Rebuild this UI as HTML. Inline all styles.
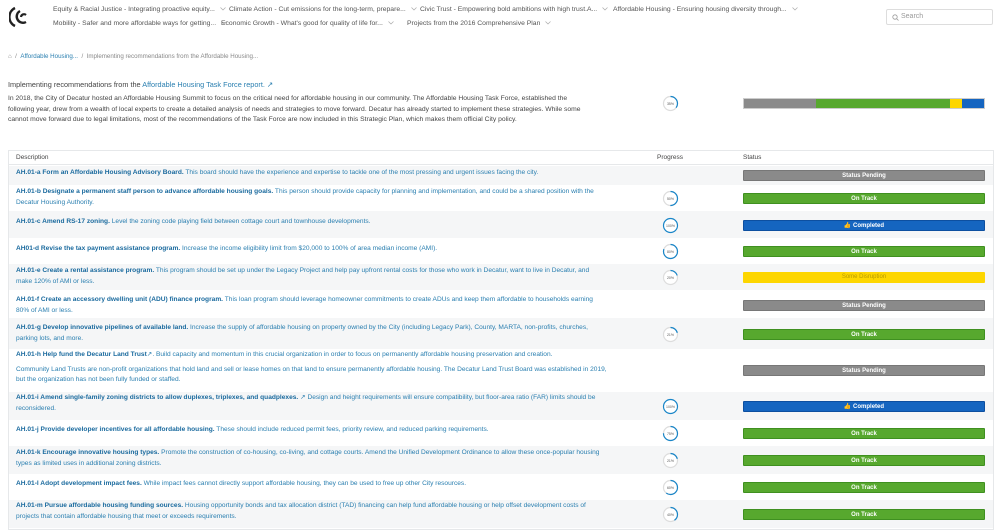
<!DOCTYPE html>
<html><head><meta charset="utf-8"><style>
*{margin:0;padding:0;box-sizing:border-box}
body{width:1000px;height:530px;overflow:hidden;background:#fff;font-family:"Liberation Sans",sans-serif;color:#333;position:relative}
.a{position:absolute}
.nav{font-size:6.8px;color:#555;white-space:nowrap}
.nav svg{margin-left:5px;vertical-align:middle}
.row{position:absolute;left:9px;width:984px}
.g{background:#f5f6f7}
.d{position:absolute;left:7px;width:590px;font-size:6.6px;line-height:10.5px;color:#2a7fb0}
.d b{color:#1a6a9e}
.st{position:absolute;left:734px;width:242px;height:11px;font-size:6px;font-weight:bold;color:#fff;text-align:center;line-height:10px;border-radius:1px}
.gr{background:#8a8a8a;border:1px solid #777}
.on{background:#57a82e;border:1px solid #3f9020}
.cp{background:#1565c0;border:1px solid #0d4fa0}
.ye{background:#fdd600;color:#b89b00;font-weight:normal}
.pc{position:absolute;left:653px}
</style></head><body>
<svg class="a" style="left:9px;top:5px" width="22" height="24" viewBox="0 0 22 24"><path d="M6 3 A10 10 0 0 0 6 21" fill="none" stroke="#222" stroke-width="2.4"/><path d="M11 6 A6 6 0 1 0 17 17" fill="none" stroke="#222" stroke-width="2.4"/><path d="M12 12 A3 3 0 0 1 17 10" fill="none" stroke="#222" stroke-width="2.2"/></svg>
<div class="a nav" style="left:53px;top:6px">Equity &amp; Racial Justice - Integrating proactive equity...<svg width="6" height="4"><path d="M.5.5L3 3 5.5.5" stroke="#aaa" fill="none" stroke-width=".7"/></svg></div>
<div class="a nav" style="left:229px;top:6px">Climate Action - Cut emissions for the long-term, prepare...<svg width="6" height="4"><path d="M.5.5L3 3 5.5.5" stroke="#aaa" fill="none" stroke-width=".7"/></svg></div>
<div class="a nav" style="left:420px;top:6px">Civic Trust - Empowering bold ambitions with high trust.A...<svg width="6" height="4"><path d="M.5.5L3 3 5.5.5" stroke="#aaa" fill="none" stroke-width=".7"/></svg></div>
<div class="a nav" style="left:613px;top:6px">Affordable Housing - Ensuring housing diversity through...<svg width="6" height="4"><path d="M.5.5L3 3 5.5.5" stroke="#aaa" fill="none" stroke-width=".7"/></svg></div>
<div class="a nav" style="left:53px;top:20px">Mobility - Safer and more affordable ways for getting...<svg width="6" height="4"><path d="M.5.5L3 3 5.5.5" stroke="#aaa" fill="none" stroke-width=".7"/></svg></div>
<div class="a nav" style="left:221px;top:20px">Economic Growth - What's good for quality of life for...<svg width="6" height="4"><path d="M.5.5L3 3 5.5.5" stroke="#aaa" fill="none" stroke-width=".7"/></svg></div>
<div class="a nav" style="left:407px;top:20px">Projects from the 2016 Comprehensive Plan<svg width="6" height="4"><path d="M.5.5L3 3 5.5.5" stroke="#aaa" fill="none" stroke-width=".7"/></svg></div>
<div class="a" style="left:886px;top:9px;width:107px;height:16px;border:1px solid #ddd;border-radius:2px;font-size:7px;color:#999;padding:3px 0 0 14px">Search<svg class="a" style="left:5px;top:4px" width="7" height="7"><circle cx="3" cy="3" r="2.2" fill="none" stroke="#999" stroke-width=".8"/><path d="M4.6 4.6L6.5 6.5" stroke="#999" stroke-width=".8"/></svg></div>
<div class="a" style="left:8px;top:53px;font-size:6.2px;color:#888">⌂ &nbsp;/ &nbsp;<span style="color:#2a7fb0">Affordable Housing...</span> &nbsp;/ &nbsp;Implementing recommendations from the Affordable Housing...</div>
<div class="a" style="left:8px;top:80px;font-size:7.3px;color:#444">Implementing recommendations from the <span style="color:#2a7fb0">Affordable Housing Task Force report. ↗</span></div>
<div class="a" style="left:8px;top:94px;width:580px;font-size:6.75px;line-height:10.5px;color:#444">In 2018, the City of Decatur hosted an Affordable Housing Summit to focus on the critical need for affordable housing in our community. The Affordable Housing Task Force, established the following year, drew from a wealth of local experts to create a detailed analysis of needs and strategies to move forward. Decatur has already started to implement these strategies. While some cannot move forward due to legal limitations, most of the recommendations of the Task Force are now included in this Strategic Plan, which makes them official City policy.</div>
<svg class="a" style="left:662px;top:95px" width="17" height="17"><circle cx="8.5" cy="8.5" r="7" fill="#fff" stroke="#ddd" stroke-width="1.2"/><circle cx="8.5" cy="8.5" r="7" fill="none" stroke="#1a86c8" stroke-width="1.2" stroke-dasharray="15.4 44" transform="rotate(-90 8.5 8.5)"/><text x="8.5" y="10" font-size="3.5" text-anchor="middle" fill="#555" font-family="Liberation Sans">35%</text></svg>
<div class="a" style="left:743px;top:98px;width:242px;height:11px;display:flex;border:1px solid #ccc"><div style="width:72px;background:#8a8a8a"></div><div style="width:134px;background:#57a82e"></div><div style="width:12px;background:#fdd600"></div><div style="flex:1;background:#1565c0"></div></div>

<div class="a" style="left:8px;top:150px;width:986px;height:380px;border:1px solid #e6e8ea"></div>
<div class="row" style="top:151px;height:14px;border-bottom:1px solid #e6e8ea"><div class="a" style="left:7px;top:3px;font-size:6.5px;color:#444">Description</div><div class="a" style="left:648px;top:3px;font-size:6.5px;color:#444">Progress</div><div class="a" style="left:734px;top:3px;font-size:6.5px;color:#444">Status</div></div>

<div class="row g" style="top:166px;height:19px"><div class="d" style="top:2px;width:720px"><b>AH.01-a Form an Affordable Housing Advisory Board.</b> This board should have the experience and expertise to tackle one of the most pressing and urgent issues facing the city.</div><div class="st gr" style="top:4px">Status Pending</div></div>

<div class="row" style="top:185px;height:26px"><div class="d" style="top:2px"><b>AH.01-b Designate a permanent staff person to advance affordable housing goals.</b> This person should provide capacity for planning and implementation, and could be a shared position with the Decatur Housing Authority.</div><svg class="pc" style="top:5px" width="17" height="17"><circle cx="8.5" cy="8.5" r="7" fill="#fff" stroke="#ddd" stroke-width="1.2"/><circle cx="8.5" cy="8.5" r="7" fill="none" stroke="#1a86c8" stroke-width="1.2" stroke-dasharray="22 44" transform="rotate(-90 8.5 8.5)"/><text x="8.5" y="10" font-size="3.5" text-anchor="middle" fill="#555">50%</text></svg><div class="st on" style="top:8px">On Track</div></div>

<div class="row g" style="top:211px;height:27px"><div class="d" style="top:6px"><b>AH.01-c Amend RS-17 zoning.</b> Level the zoning code playing field between cottage court and townhouse developments.</div><svg class="pc" style="top:6px" width="17" height="17"><circle cx="8.5" cy="8.5" r="7" fill="#fff" stroke="#1a86c8" stroke-width="1.2"/><text x="8.5" y="10" font-size="3.5" text-anchor="middle" fill="#555">100%</text></svg><div class="st cp" style="top:9px">👍 Completed</div></div>

<div class="row" style="top:238px;height:26px"><div class="d" style="top:6px"><b>AH01-d Revise the tax payment assistance program.</b> Increase the income eligibility limit from $20,000 to 100% of area median income (AMI).</div><svg class="pc" style="top:5px" width="17" height="17"><circle cx="8.5" cy="8.5" r="7" fill="#fff" stroke="#ddd" stroke-width="1.2"/><circle cx="8.5" cy="8.5" r="7" fill="none" stroke="#1a86c8" stroke-width="1.2" stroke-dasharray="35.2 44" transform="rotate(-90 8.5 8.5)"/><text x="8.5" y="10" font-size="3.5" text-anchor="middle" fill="#555">80%</text></svg><div class="st on" style="top:8px">On Track</div></div>

<div class="row g" style="top:264px;height:26px"><div class="d" style="top:2px"><b>AH.01-e Create a rental assistance program.</b> This program should be set up under the Legacy Project and help pay upfront rental costs for those who work in Decatur, want to live in Decatur, and make 120% of AMI or less.</div><svg class="pc" style="top:5px" width="17" height="17"><circle cx="8.5" cy="8.5" r="7" fill="#fff" stroke="#ddd" stroke-width="1.2"/><circle cx="8.5" cy="8.5" r="7" fill="none" stroke="#1a86c8" stroke-width="1.2" stroke-dasharray="8.8 44" transform="rotate(-90 8.5 8.5)"/><text x="8.5" y="10" font-size="3.5" text-anchor="middle" fill="#555">20%</text></svg><div class="st ye" style="top:8px">Some Disruption</div></div>

<div class="row" style="top:290px;height:28px"><div class="d" style="top:5px"><b>AH.01-f Create an accessory dwelling unit (ADU) finance program.</b> This loan program should leverage homeowner commitments to create ADUs and keep them affordable to households earning 80% of AMI or less.</div><div class="st gr" style="top:10px">Status Pending</div></div>

<div class="row g" style="top:318px;height:31px"><div class="d" style="top:5px"><b>AH.01-g Develop innovative pipelines of available land.</b> Increase the supply of affordable housing on property owned by the City (including Legacy Park), County, MARTA, non-profits, churches, parking lots, and more.</div><svg class="pc" style="top:8px" width="17" height="17"><circle cx="8.5" cy="8.5" r="7" fill="#fff" stroke="#ddd" stroke-width="1.2"/><circle cx="8.5" cy="8.5" r="7" fill="none" stroke="#1a86c8" stroke-width="1.2" stroke-dasharray="9.2 44" transform="rotate(-90 8.5 8.5)"/><text x="8.5" y="10" font-size="3.5" text-anchor="middle" fill="#555">21%</text></svg><div class="st on" style="top:11px">On Track</div></div>

<div class="row" style="top:349px;height:43px"><div class="d" style="top:1px;width:600px"><b>AH.01-h Help fund the Decatur Land Trust</b>↗. Build capacity and momentum in this crucial organization in order to focus on permanently affordable housing preservation and creation.<div style="margin-top:4px">Community Land Trusts are non-profit organizations that hold land and sell or lease homes on that land to ensure permanently affordable housing. The Decatur Land Trust Board was established in 2019, but the organization has not been fully funded or staffed.</div></div><div class="st gr" style="top:16px">Status Pending</div></div>

<div class="row g" style="top:392px;height:28px"><div class="d" style="top:1px"><b>AH.01-i Amend single-family zoning districts to allow duplexes, triplexes, and quadplexes.</b> ↗ Design and height requirements will ensure compatibility, but floor-area ratio (FAR) limits should be reconsidered.</div><svg class="pc" style="top:6px" width="17" height="17"><circle cx="8.5" cy="8.5" r="7" fill="#fff" stroke="#1a86c8" stroke-width="1.2"/><text x="8.5" y="10" font-size="3.5" text-anchor="middle" fill="#555">100%</text></svg><div class="st cp" style="top:9px">👍 Completed</div></div>

<div class="row" style="top:420px;height:26px"><div class="d" style="top:5px"><b>AH.01-j Provide developer incentives for all affordable housing.</b> These should include reduced permit fees, priority review, and reduced parking requirements.</div><svg class="pc" style="top:5px" width="17" height="17"><circle cx="8.5" cy="8.5" r="7" fill="#fff" stroke="#ddd" stroke-width="1.2"/><circle cx="8.5" cy="8.5" r="7" fill="none" stroke="#1a86c8" stroke-width="1.2" stroke-dasharray="33 44" transform="rotate(-90 8.5 8.5)"/><text x="8.5" y="10" font-size="3.5" text-anchor="middle" fill="#555">75%</text></svg><div class="st on" style="top:8px">On Track</div></div>

<div class="row g" style="top:446px;height:28px"><div class="d" style="top:2px"><b>AH.01-k Encourage innovative housing types.</b> Promote the construction of co-housing, co-living, and cottage courts. Amend the Unified Development Ordinance to allow these once-popular housing types as limited uses in additional zoning districts.</div><svg class="pc" style="top:6px" width="17" height="17"><circle cx="8.5" cy="8.5" r="7" fill="#fff" stroke="#ddd" stroke-width="1.2"/><circle cx="8.5" cy="8.5" r="7" fill="none" stroke="#1a86c8" stroke-width="1.2" stroke-dasharray="9.2 44" transform="rotate(-90 8.5 8.5)"/><text x="8.5" y="10" font-size="3.5" text-anchor="middle" fill="#555">21%</text></svg><div class="st on" style="top:9px">On Track</div></div>

<div class="row" style="top:474px;height:26px"><div class="d" style="top:5px"><b>AH.01-l Adopt development impact fees.</b> While impact fees cannot directly support affordable housing, they can be used to free up other City resources.</div><svg class="pc" style="top:5px" width="17" height="17"><circle cx="8.5" cy="8.5" r="7" fill="#fff" stroke="#ddd" stroke-width="1.2"/><circle cx="8.5" cy="8.5" r="7" fill="none" stroke="#1a86c8" stroke-width="1.2" stroke-dasharray="26.4 44" transform="rotate(-90 8.5 8.5)"/><text x="8.5" y="10" font-size="3.5" text-anchor="middle" fill="#555">60%</text></svg><div class="st on" style="top:8px">On Track</div></div>

<div class="row g" style="top:500px;height:28px"><div class="d" style="top:1px"><b>AH.01-m Pursue affordable housing funding sources.</b> Housing opportunity bonds and tax allocation district (TAD) financing can help fund affordable housing or help offset development costs of projects that contain affordable housing that meet or exceeds requirements.</div><svg class="pc" style="top:6px" width="17" height="17"><circle cx="8.5" cy="8.5" r="7" fill="#fff" stroke="#ddd" stroke-width="1.2"/><circle cx="8.5" cy="8.5" r="7" fill="none" stroke="#1a86c8" stroke-width="1.2" stroke-dasharray="17.6 44" transform="rotate(-90 8.5 8.5)"/><text x="8.5" y="10" font-size="3.5" text-anchor="middle" fill="#555">40%</text></svg><div class="st on" style="top:9px">On Track</div></div>
</body></html>
